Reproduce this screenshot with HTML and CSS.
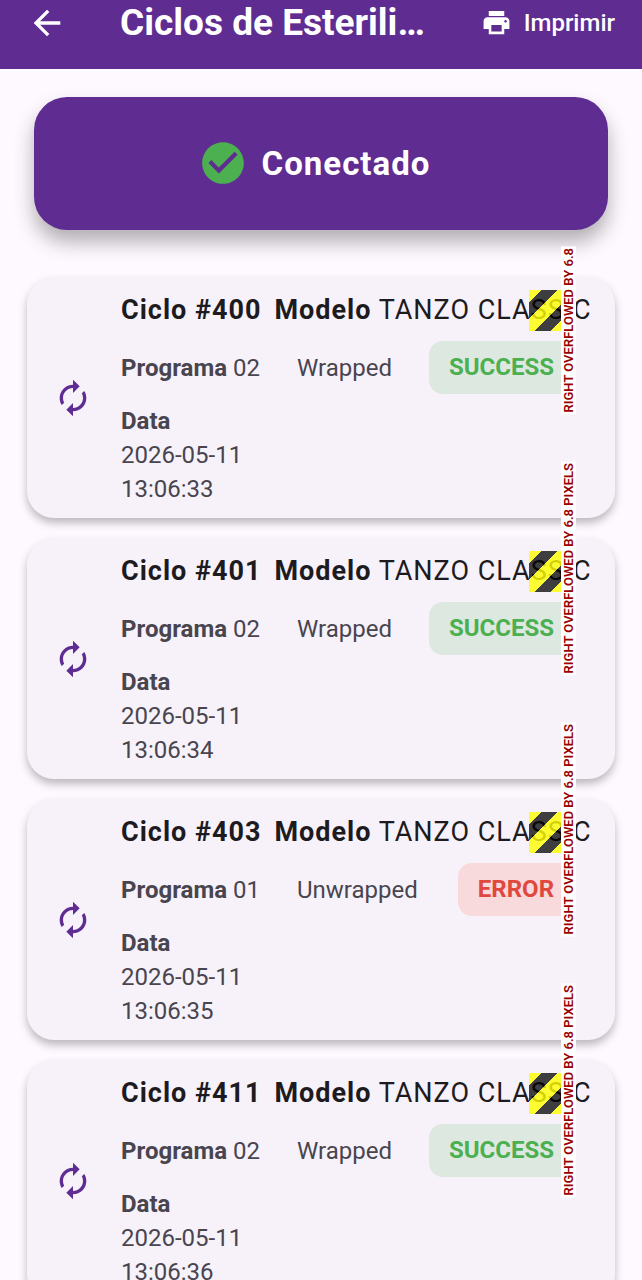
FILE: index.html
```html
<!DOCTYPE html>
<html lang="pt">
<head>
  <meta charset="UTF-8" />
  <title>Ciclos de Esterilização</title>
  <meta name="viewport" content="width=device-width, initial-scale=1.0" />
  <link rel="stylesheet" href="styles.css">
</head>
<body>

  <header class="app-bar">
    <button class="back" aria-label="Voltar">
      <svg viewBox="0 0 24 24"><path d="M20 11H7.83l5.59-5.59L12 4l-8 8 8 8 1.41-1.41L7.83 13H20v-2z"/></svg>
    </button>
    <h1>Ciclos de Esterili…</h1>
    <button class="print">
      <svg viewBox="0 0 24 24"><path d="M19 8H5c-1.66 0-3 1.34-3 3v6h4v4h12v-4h4v-6c0-1.66-1.34-3-3-3zm-3 11H8v-5h8v5zm3-7c-.55 0-1-.45-1-1s.45-1 1-1 1 .45 1 1-.45 1-1 1zm-1-9H6v4h12V3z"/></svg>
      Imprimir
    </button>
  </header>

  <div class="status">
    <svg viewBox="0 0 24 24"><path d="M12 2C6.48 2 2 6.48 2 12s4.48 10 10 10 10-4.48 10-10S17.52 2 12 2zm-2 15l-5-5 1.41-1.41L10 14.17l7.59-7.59L19 8l-9 9z"/></svg>
    <span>Conectado</span>
  </div>

  <main class="cycles">
    <article class="card">
      <svg class="cycle-icon" viewBox="0 0 24 24"><path d="M12 6v3l4-4-4-4v3c-4.42 0-8 3.58-8 8 0 1.57.46 3.03 1.24 4.26L6.7 14.8c-.45-.83-.7-1.79-.7-2.8 0-3.31 2.69-6 6-6zm6.76 1.74L17.3 9.2c.44.84.7 1.79.7 2.8 0 3.31-2.69 6-6 6v-3l-4 4 4 4v-3c4.42 0 8-3.58 8-8 0-1.57-.46-3.03-1.24-4.26z"/></svg>
      <div class="card-body">
        <h2><b>Ciclo #400</b><b>Modelo</b> TANZO CLASSIC</h2>
        <div class="program">
          <span><b>Programa</b> 02</span>
          <span>Wrapped</span>
          <span class="badge success">SUCCESS</span>
        </div>
        <p class="date"><b>Data</b><br>2026-05-11<br>13:06:33</p>
        <div class="hazard"></div>
        <div class="overflow-label">RIGHT OVERFLOWED BY 6.8</div>
      </div>
    </article>

    <article class="card">
      <svg class="cycle-icon" viewBox="0 0 24 24"><path d="M12 6v3l4-4-4-4v3c-4.42 0-8 3.58-8 8 0 1.57.46 3.03 1.24 4.26L6.7 14.8c-.45-.83-.7-1.79-.7-2.8 0-3.31 2.69-6 6-6zm6.76 1.74L17.3 9.2c.44.84.7 1.79.7 2.8 0 3.31-2.69 6-6 6v-3l-4 4 4 4v-3c4.42 0 8-3.58 8-8 0-1.57-.46-3.03-1.24-4.26z"/></svg>
      <div class="card-body">
        <h2><b>Ciclo #401</b><b>Modelo</b> TANZO CLASSIC</h2>
        <div class="program">
          <span><b>Programa</b> 02</span>
          <span>Wrapped</span>
          <span class="badge success">SUCCESS</span>
        </div>
        <p class="date"><b>Data</b><br>2026-05-11<br>13:06:34</p>
        <div class="hazard"></div>
        <div class="overflow-label">RIGHT OVERFLOWED BY 6.8 PIXELS</div>
      </div>
    </article>

    <article class="card">
      <svg class="cycle-icon" viewBox="0 0 24 24"><path d="M12 6v3l4-4-4-4v3c-4.42 0-8 3.58-8 8 0 1.57.46 3.03 1.24 4.26L6.7 14.8c-.45-.83-.7-1.79-.7-2.8 0-3.31 2.69-6 6-6zm6.76 1.74L17.3 9.2c.44.84.7 1.79.7 2.8 0 3.31-2.69 6-6 6v-3l-4 4 4 4v-3c4.42 0 8-3.58 8-8 0-1.57-.46-3.03-1.24-4.26z"/></svg>
      <div class="card-body">
        <h2><b>Ciclo #403</b><b>Modelo</b> TANZO CLASSIC</h2>
        <div class="program">
          <span><b>Programa</b> 01</span>
          <span>Unwrapped</span>
          <span class="badge error">ERROR</span>
        </div>
        <p class="date"><b>Data</b><br>2026-05-11<br>13:06:35</p>
        <div class="hazard"></div>
        <div class="overflow-label">RIGHT OVERFLOWED BY 6.8 PIXELS</div>
      </div>
    </article>

    <article class="card">
      <svg class="cycle-icon" viewBox="0 0 24 24"><path d="M12 6v3l4-4-4-4v3c-4.42 0-8 3.58-8 8 0 1.57.46 3.03 1.24 4.26L6.7 14.8c-.45-.83-.7-1.79-.7-2.8 0-3.31 2.69-6 6-6zm6.76 1.74L17.3 9.2c.44.84.7 1.79.7 2.8 0 3.31-2.69 6-6 6v-3l-4 4 4 4v-3c4.42 0 8-3.58 8-8 0-1.57-.46-3.03-1.24-4.26z"/></svg>
      <div class="card-body">
        <h2><b>Ciclo #411</b><b>Modelo</b> TANZO CLASSIC</h2>
        <div class="program">
          <span><b>Programa</b> 02</span>
          <span>Wrapped</span>
          <span class="badge success">SUCCESS</span>
        </div>
        <p class="date"><b>Data</b><br>2026-05-11<br>13:06:36</p>
        <div class="hazard"></div>
        <div class="overflow-label">RIGHT OVERFLOWED BY 6.8 PIXELS</div>
      </div>
    </article>
  </main>

</body>
</html>
```
FILE: styles.css
```css
body {
  font-family: Roboto, sans-serif;
  background-color: #fef8ff;
  margin: 0;
  height: 100vh;
  overflow: hidden;
}

h1, h2, p {
  margin: 0;
}

svg {
  fill: currentColor;
  flex-shrink: 0;
}

button {
  background: none;
  border: none;
  padding: 0;
  color: inherit;
  font-family: inherit;
  cursor: pointer;
}

.app-bar {
  display: flex;
  align-items: center;
  padding: 0 27px 24px;
  background-color: #5f2c92;
  color: white;
}

.back {
  display: flex;
  margin-right: 53px;
}

.back svg {
  width: 40px;
  height: 40px;
}

.app-bar h1 {
  flex: 1;
  font-size: 37px;
  font-weight: bold;
  line-height: 45px;
  white-space: nowrap;
}

.print {
  display: flex;
  align-items: center;
  gap: 12px;
  font-size: 24px;
  font-weight: 500;
}

.print svg {
  width: 31px;
  height: 31px;
}

.status {
  display: flex;
  align-items: center;
  justify-content: center;
  gap: 14px;
  margin: 28px 34px 47px;
  padding: 41px 14px 42px 0;
  border-radius: 33px;
  background-color: #5f2c92;
  box-shadow: 0 12px 20px rgba(0,0,0,0.3);
  color: white;
  font-size: 33px;
  font-weight: bold;
  letter-spacing: 1px;
}

.status svg {
  width: 50px;
  height: 50px;
  color: #4caf50;
}

.cycles {
  display: flex;
  flex-direction: column;
  gap: 20px;
  padding: 0 27px;
}

.card {
  display: flex;
  align-items: center;
  gap: 28px;
  padding: 13px 41px 12px 26px;
  border-radius: 27px;
  background-color: #f7f2fa;
  box-shadow: 0 5px 8px rgba(0,0,0,0.26);
}

.cycle-icon {
  width: 40px;
  height: 40px;
  color: #5f2c92;
}

.card-body {
  position: relative;
  flex: 1;
  min-width: 0;
  color: #49454f;
  font-size: 24px;
}

.card h2 {
  color: #1d1b20;
  font-size: 27px;
  font-weight: normal;
  line-height: 41px;
  letter-spacing: 1px;
  white-space: nowrap;
}

.card h2 b:first-child {
  margin-right: 13px;
}

.program {
  display: flex;
  align-items: center;
  gap: 37px;
  margin: 10px 0;
  white-space: nowrap;
}

.badge {
  margin-left: auto;
  padding: 0 20px;
  border-radius: 14px;
  line-height: 53px;
  font-weight: bold;
}

.success {
  background-color: #dde8e0;
  color: #4caf50;
}

.error {
  background-color: #f8d9dc;
  color: #e0483e;
}

.date {
  line-height: 34px;
}

/* striped marker and its vertical text lie over the card */
.hazard {
  position: absolute;
  top: 0;
  right: 13px;
  width: 32px;
  height: 41px;
  background: repeating-linear-gradient(135deg,
    rgba(255,255,0,0.8) 0 9px,
    rgba(0,0,0,0.75) 9px 20px,
    rgba(255,255,0,0.8) 20px 24px);
}

.overflow-label {
  position: absolute;
  right: -2px;
  bottom: 92px;
  width: 15px;
  padding: 2px 0;
  background-color: white;
  color: #900;
  font-size: 13px;
  font-weight: 600;
  line-height: 15px;
  white-space: nowrap;
  writing-mode: vertical-rl;
  transform: rotate(180deg);
}
```
